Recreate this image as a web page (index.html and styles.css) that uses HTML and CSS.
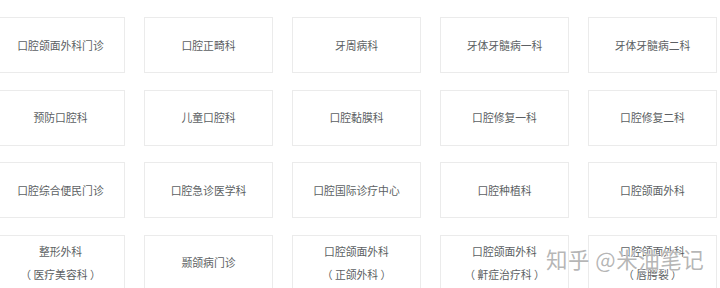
FILE: index.html
```html
<!DOCTYPE html>
<html lang="zh-CN">
<head>
<meta charset="utf-8">
<link rel="stylesheet" href="styles.css">
</head>
<body>
<div class="grid">
  <div class="cell">口腔颌面外科门诊</div>
  <div class="cell">口腔正畸科</div>
  <div class="cell">牙周病科</div>
  <div class="cell">牙体牙髓病一科</div>
  <div class="cell">牙体牙髓病二科</div>
  <div class="cell">预防口腔科</div>
  <div class="cell">儿童口腔科</div>
  <div class="cell">口腔黏膜科</div>
  <div class="cell">口腔修复一科</div>
  <div class="cell">口腔修复二科</div>
  <div class="cell">口腔综合便民门诊</div>
  <div class="cell">口腔急诊医学科</div>
  <div class="cell">口腔国际诊疗中心</div>
  <div class="cell">口腔种植科</div>
  <div class="cell">口腔颌面外科</div>
  <div class="cell"><span>整形外科</span><span class="sub">（ 医疗美容科 ）</span></div>
  <div class="cell">颞颌病门诊</div>
  <div class="cell"><span>口腔颌面外科</span><span class="sub">（ 正颌外科 ）</span></div>
  <div class="cell"><span>口腔颌面外科</span><span class="sub">（ 鼾症治疗科 ）</span></div>
  <div class="cell"><span>口腔颌面外科</span><span class="sub">（ 唇腭裂 ）</span></div>
</div>
<div class="watermark">知乎 @米油笔记</div>
</body>
</html>
```

FILE: styles.css
```css
html, body {
  margin: 0;
  padding: 0;
  background: #fff;
  overflow: hidden;
}
body {
  width: 720px;
  height: 288px;
  position: relative;
  font-family: "Noto Sans CJK SC", "Noto Sans", sans-serif;
}
.grid {
  display: grid;
  grid-template-columns: repeat(5, 129px);
  grid-auto-rows: 56px;
  column-gap: 19px;
  row-gap: 16.5px;
  padding-top: 17px;
  margin-left: -4px;
}
.cell {
  box-sizing: border-box;
  border: 1px solid #ebebeb;
  display: flex;
  flex-direction: column;
  align-items: center;
  justify-content: center;
  font-size: 10.8px;
  line-height: 23px;
  color: #5c5f63;
  text-align: center;
}
.sub {
  white-space: pre;
}
.watermark {
  position: absolute;
  left: 546px;
  top: 243px;
  font-size: 21.5px;
  color: rgba(150, 150, 150, 0.7);
  text-shadow: 0 0 2px #fff, 0 0 1px #fff;
  letter-spacing: 0.5px;
  white-space: nowrap;
}
```
